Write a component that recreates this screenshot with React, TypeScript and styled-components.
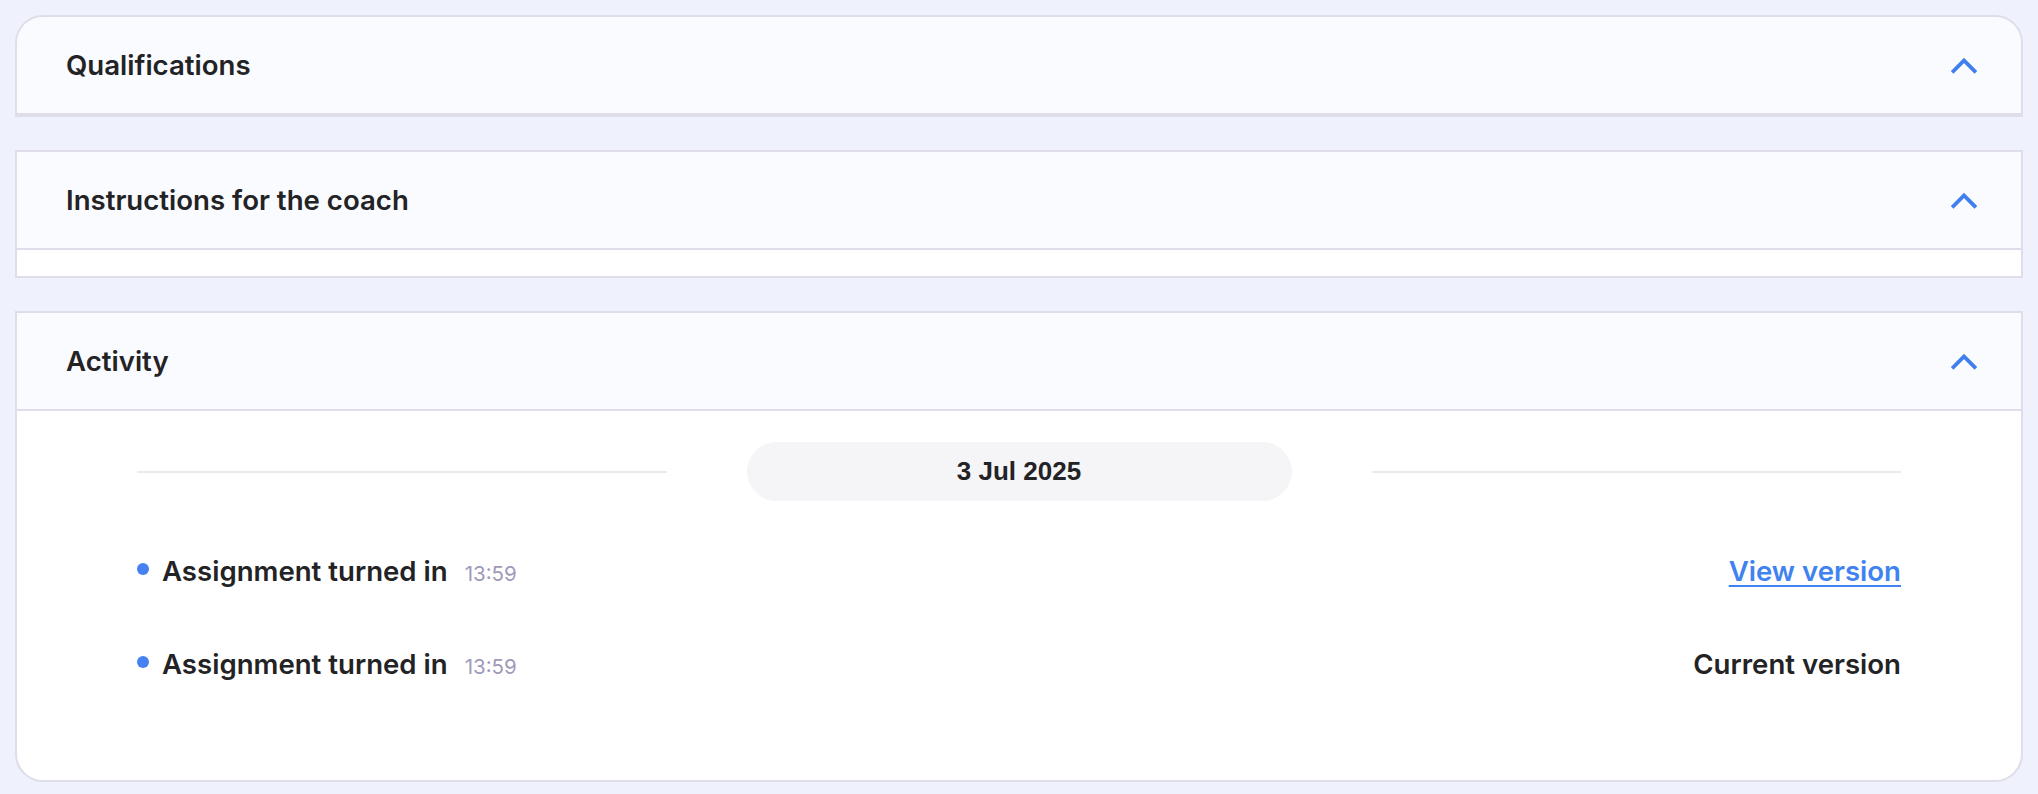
import React from "react";
import styled, { createGlobalStyle } from "styled-components";

const GlobalStyle = createGlobalStyle`
  html, body {
    margin: 0;
    padding: 0;
    background: #eff1fc;
  }
  body {
    font-family: Inter, "Noto Sans", sans-serif;
    color: #232325;
  }
`;

const Page = styled.div`
  display: flex;
  flex-direction: column;
  gap: 33px;
  padding: 15px 15px 14px;
`;

const Card = styled.section<{ $top?: boolean; $bottom?: boolean }>`
  display: flex;
  flex-direction: column;
  border: 2px solid #dedde9;
  background: #ffffff;
  overflow: hidden;
  border-top-left-radius: ${(p) => (p.$top ? "28px" : "0")};
  border-top-right-radius: ${(p) => (p.$top ? "28px" : "0")};
  border-bottom-left-radius: ${(p) => (p.$bottom ? "28px" : "0")};
  border-bottom-right-radius: ${(p) => (p.$bottom ? "28px" : "0")};
`;

const Header = styled.header`
  display: flex;
  align-items: center;
  justify-content: space-between;
  height: 96px;
  padding: 0 44px 0 49px;
  background: #fafbff;
  border-bottom: 2px solid #dedde9;
`;

const Title = styled.h2`
  margin: 0;
  font-family: Inter, "Noto Sans", sans-serif;
  font-size: 27.6px;
  font-weight: 600;
  color: #232325;
`;

const Body = styled.div<{ $pad?: string }>`
  padding: ${(p) => p.$pad || "0"};
`;

const DateRow = styled.div`
  display: flex;
  align-items: center;
  gap: 80px;
`;

const Line = styled.div`
  flex: 1;
  height: 2px;
  background: #e9e9ef;
`;

const Pill = styled.div`
  width: 545px;
  height: 59px;
  border-radius: 30px;
  background: #f5f5f8;
  display: flex;
  align-items: center;
  justify-content: center;
  font-family: "Liberation Sans", Arial, sans-serif;
  font-weight: 700;
  font-size: 26px;
  color: #232325;
`;

const Events = styled.ul`
  list-style: none;
  margin: 50px 0 0;
  padding: 0;
  display: flex;
  flex-direction: column;
  gap: 53px;
`;

const Event = styled.li`
  display: flex;
  align-items: center;
  height: 40px;
`;

const Dot = styled.span`
  width: 12px;
  height: 12px;
  border-radius: 50%;
  background: #4681f2;
  margin: 0 13px 0 0;
  align-self: center;
  transform: translateY(-2px);
`;

const EventText = styled.span`
  font-size: 27.6px;
  font-weight: 600;
  color: #232325;
`;

const Time = styled.span`
  font-size: 20.5px;
  font-weight: 400;
  color: #9d9bb9;
  margin-left: 17px;
  padding-top: 4px;
`;

const Spacer = styled.span`
  flex: 1;
`;

const Action = styled.a<{ $link?: boolean }>`
  font-size: 27.6px;
  font-weight: 600;
  color: ${(p) => (p.$link ? "#4182f1" : "#232325")};
  text-decoration: ${(p) => (p.$link ? "underline" : "none")};
  text-underline-offset: 4px;
  text-decoration-thickness: 2px;
  cursor: ${(p) => (p.$link ? "pointer" : "default")};
`;

const Chevron = () => (
  <svg width="26" height="17" viewBox="0 0 26 17" fill="none">
    <polyline
      points="2.5,14 13,3.5 23.5,14"
      stroke="#3f7ff0"
      strokeWidth="3.8"
      strokeLinecap="square"
      strokeLinejoin="miter"
    />
  </svg>
);

export default function App() {
  return (
    <>
      <GlobalStyle />
      <Page>
        <Card $top>
          <Header>
            <Title>Qualifications</Title>
            <Chevron />
          </Header>
          <Body />
        </Card>
        <Card>
          <Header>
            <Title>Instructions for the coach</Title>
            <Chevron />
          </Header>
          <Body $pad="13px 0" />
        </Card>
        <Card $bottom>
          <Header>
            <Title>Activity</Title>
            <Chevron />
          </Header>
          <Body $pad="31px 120px 96px">
            <DateRow>
              <Line />
              <Pill>3 Jul 2025</Pill>
              <Line />
            </DateRow>
            <Events>
              <Event>
                <Dot />
                <EventText>Assignment turned in</EventText>
                <Time>13:59</Time>
                <Spacer />
                <Action $link href="#">View version</Action>
              </Event>
              <Event>
                <Dot />
                <EventText>Assignment turned in</EventText>
                <Time>13:59</Time>
                <Spacer />
                <Action>Current version</Action>
              </Event>
            </Events>
          </Body>
        </Card>
      </Page>
    </>
  );
}
